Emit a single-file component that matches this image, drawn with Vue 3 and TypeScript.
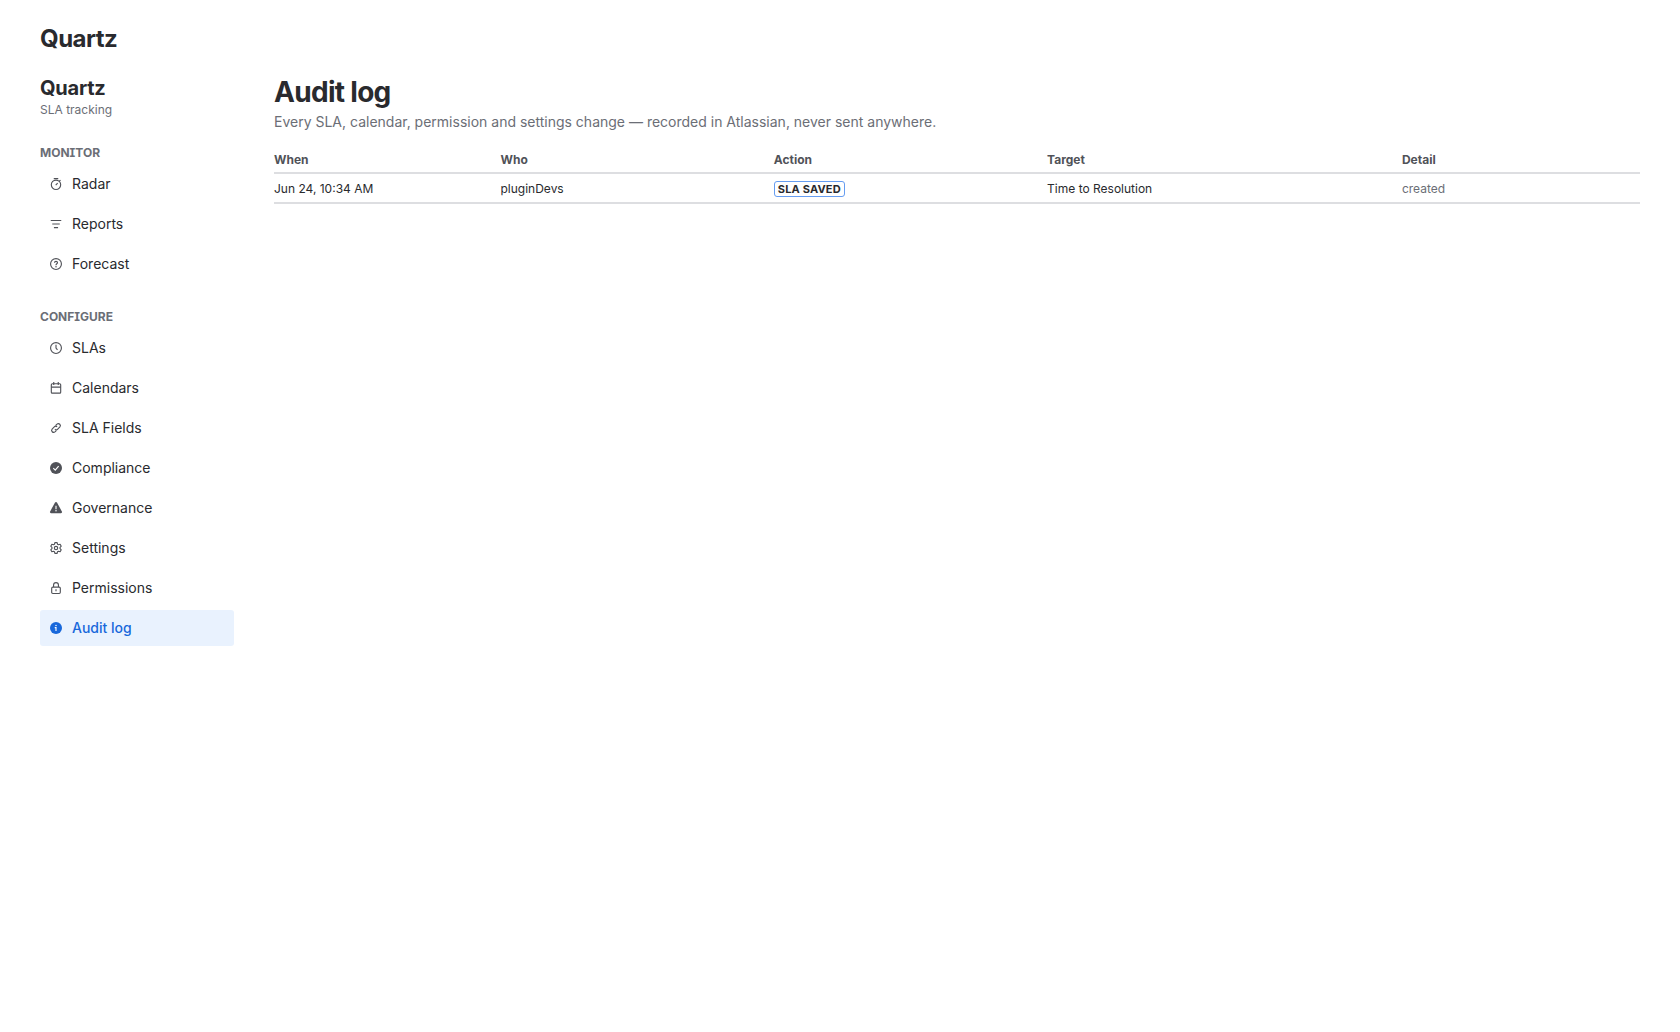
<script setup lang="ts">
interface NavItem {
  label: string
  icon: string
}
interface NavGroup {
  title: string
  items: NavItem[]
}
interface AuditEntry {
  when: string
  who: string
  action: string
  target: string
  detail: string
}

const groups: NavGroup[] = [
  {
    title: 'MONITOR',
    items: [
      { label: 'Radar', icon: 'stopwatch' },
      { label: 'Reports', icon: 'filter' },
      { label: 'Forecast', icon: 'question' },
    ],
  },
  {
    title: 'CONFIGURE',
    items: [
      { label: 'SLAs', icon: 'clock' },
      { label: 'Calendars', icon: 'calendar' },
      { label: 'SLA Fields', icon: 'link' },
      { label: 'Compliance', icon: 'check' },
      { label: 'Governance', icon: 'warning' },
      { label: 'Settings', icon: 'gear' },
      { label: 'Permissions', icon: 'lock' },
      { label: 'Audit log', icon: 'info' },
    ],
  },
]
const active = 'Audit log'

const entries: AuditEntry[] = [
  {
    when: 'Jun 24, 10:34 AM',
    who: 'pluginDevs',
    action: 'SLA SAVED',
    target: 'Time to Resolution',
    detail: 'created',
  },
]
</script>

<template>
  <div class="page">
    <header class="app-title">Quartz</header>
    <div class="layout">
      <nav class="sidebar">
        <div class="brand">Quartz</div>
        <div class="tagline">SLA tracking</div>
        <section v-for="group in groups" :key="group.title" class="group">
          <h3 class="group-title">{{ group.title }}</h3>
          <a
            v-for="item in group.items"
            :key="item.label"
            class="item"
            :class="{ active: item.label === active }"
          >
            <svg class="icon" viewBox="0 0 16 16" fill="none" stroke="currentColor" stroke-width="1.5">
              <template v-if="item.icon === 'stopwatch'">
                <circle cx="8" cy="9" r="6.25" />
                <path d="M5 .75h6M12.2 4.6l1.8-1.8M7.6 9.4l2.6-2.6" />
              </template>
              <path v-else-if="item.icon === 'filter'" d="M1 3.25h14M3 8h10M5.25 12.75h5.5" />
              <template v-else-if="item.icon === 'question'">
                <circle cx="8" cy="8" r="7.25" />
                <path d="M6 6.4c0-1.2.9-1.9 2-1.9s2 .7 2 1.8c0 1.5-2 1.4-2 3.2" />
                <circle cx="8" cy="11.6" r="1" fill="currentColor" stroke="none" />
              </template>
              <template v-else-if="item.icon === 'clock'">
                <circle cx="8" cy="8" r="7.25" />
                <path d="M8 3.5V8l2 2.5" />
              </template>
              <template v-else-if="item.icon === 'calendar'">
                <rect x="1.75" y="2.25" width="12.5" height="12.5" rx="1.25" />
                <path d="M1.75 6.75h12.5M5 0v4M11 0v4" />
              </template>
              <path
                v-else-if="item.icon === 'link'"
                d="M7.6 4.6l1.8-1.8a2.7 2.7 0 0 1 3.8 3.8l-2.9 2.9a2.7 2.7 0 0 1-3.8 0M8.4 11.4l-1.8 1.8a2.7 2.7 0 0 1-3.8-3.8l2.9-2.9a2.7 2.7 0 0 1 3.8 0"
              />
              <template v-else-if="item.icon === 'check'">
                <circle cx="8" cy="8" r="8" fill="currentColor" stroke="none" />
                <path d="M4.4 8.3l2.6 2.6 4.5-5.4" stroke="#fff" />
              </template>
              <template v-else-if="item.icon === 'warning'">
                <path
                  d="M6.7.8a1.5 1.5 0 0 1 2.6 0l6.5 11.7a1.6 1.6 0 0 1-1.3 2.5h-13A1.6 1.6 0 0 1 .2 12.5z"
                  fill="currentColor"
                  stroke="none"
                />
                <path d="M8 5v4.5" stroke="#fff" />
                <circle cx="8" cy="11.8" r="1" fill="#fff" stroke="none" />
              </template>
              <template v-else-if="item.icon === 'gear'">
                <path
                  d="M6.5.8h3l.5 2.1 1.4.8 2.1-.6 1.5 2.5L13.4 7.2v1.6l1.6 1.6-1.5 2.5-2.1-.6-1.4.8-.5 2.1h-3L6 13.1l-1.4-.8-2.1.6L1 10.4l1.6-1.6V7.2L1 5.6l1.5-2.5 2.1.6L6 2.9z"
                  stroke-linejoin="round"
                />
                <circle cx="8" cy="8" r="2.25" />
              </template>
              <template v-else-if="item.icon === 'lock'">
                <rect x="2.25" y="6.75" width="11.5" height="8.5" rx="1.5" />
                <path d="M4.75 6.75V4a3.25 3.25 0 0 1 6.5 0v2.75M8 9.75v2.5" />
              </template>
              <template v-else>
                <circle cx="8" cy="8" r="8" fill="currentColor" stroke="none" />
                <path d="M6.3 7.5H8V12" stroke="#fff" />
                <circle cx="8" cy="4.7" r="1" fill="#fff" stroke="none" />
              </template>
            </svg>
            <span>{{ item.label }}</span>
          </a>
        </section>
      </nav>

      <main class="content">
        <h1 class="title">Audit log</h1>
        <p class="subtitle">
          Every SLA, calendar, permission and settings change — recorded in Atlassian, never sent anywhere.
        </p>
        <div class="table">
          <div class="row head">
            <span>When</span><span>Who</span><span>Action</span><span>Target</span><span>Detail</span>
          </div>
          <div v-for="entry in entries" :key="entry.when" class="row">
            <span>{{ entry.when }}</span>
            <span>{{ entry.who }}</span>
            <span class="action"><b class="lozenge">{{ entry.action }}</b></span>
            <span>{{ entry.target }}</span>
            <span class="muted">{{ entry.detail }}</span>
          </div>
        </div>
      </main>
    </div>
  </div>
</template>

<style>
body {
  background: #fff;
}
</style>

<style scoped>
.page {
  box-sizing: border-box;
  padding: 25px 40px 24px;
  font-family: Inter, sans-serif;
  font-size: 14px;
  line-height: 20px;
  color: #292a2e;
}
.app-title {
  font-size: 24px;
  font-weight: 653;
  line-height: 28px;
  letter-spacing: -0.5px;
}
.layout {
  display: flex;
  gap: 40px;
  margin-top: 23px;
}
.sidebar {
  flex: 0 0 194px;
}
.brand {
  font-size: 20px;
  font-weight: 653;
  line-height: 24px;
  letter-spacing: -0.24px;
}
.tagline {
  font-size: 12px;
  line-height: 16px;
  margin-top: 2px;
  color: #6b6e76;
}
.group {
  display: flex;
  flex-direction: column;
  gap: 4px;
  margin-top: 27px;
}
.group + .group {
  margin-top: 27px;
}
.group-title {
  margin: 0 0 1px;
  font-size: 12px;
  line-height: 16px;
  font-weight: 653;
  font-feature-settings: 'cv08' 1;
  color: #6b6e76;
}
.item {
  box-sizing: border-box;
  display: flex;
  align-items: center;
  gap: 10px;
  height: 36px;
  padding: 0 10px;
  border-radius: 3px;
}
.icon {
  flex: none;
  width: 12px;
  height: 12px;
  overflow: visible;
  color: #505258;
}
.active {
  background: #e9f2fe;
  color: #1868db;
  font-weight: 500;
}
.active .icon {
  color: #1868db;
}
.content {
  flex: 1;
}
.title {
  margin: 0;
  font-size: 28px;
  font-weight: 653;
  line-height: 32px;
  letter-spacing: -0.7px;
}
.subtitle {
  margin: 4px 0 0;
  color: #6b6e76;
}
.table {
  margin-top: 20px;
  font-size: 12px;
  line-height: 16px;
}
.row {
  box-sizing: border-box;
  display: grid;
  grid-template-columns: 226.5px 273.3px 273.3px 354.8px 1fr;
  align-items: center;
  height: 30px;
  padding-top: 2px;
  border-bottom: 2px solid #dddee1;
}
.head {
  height: 22px;
  padding-top: 0;
  align-items: start;
  color: #505258;
  font-weight: 653;
}
.action {
  display: flex;
}
.lozenge {
  box-sizing: border-box;
  height: 16px;
  padding: 0 3px;
  border: 1px solid #669df1;
  border-radius: 3px;
  font-size: 11px;
  line-height: 14px;
  font-weight: 653;
  letter-spacing: 0.165px;
}
.muted {
  color: #6b6e76;
}
</style>
